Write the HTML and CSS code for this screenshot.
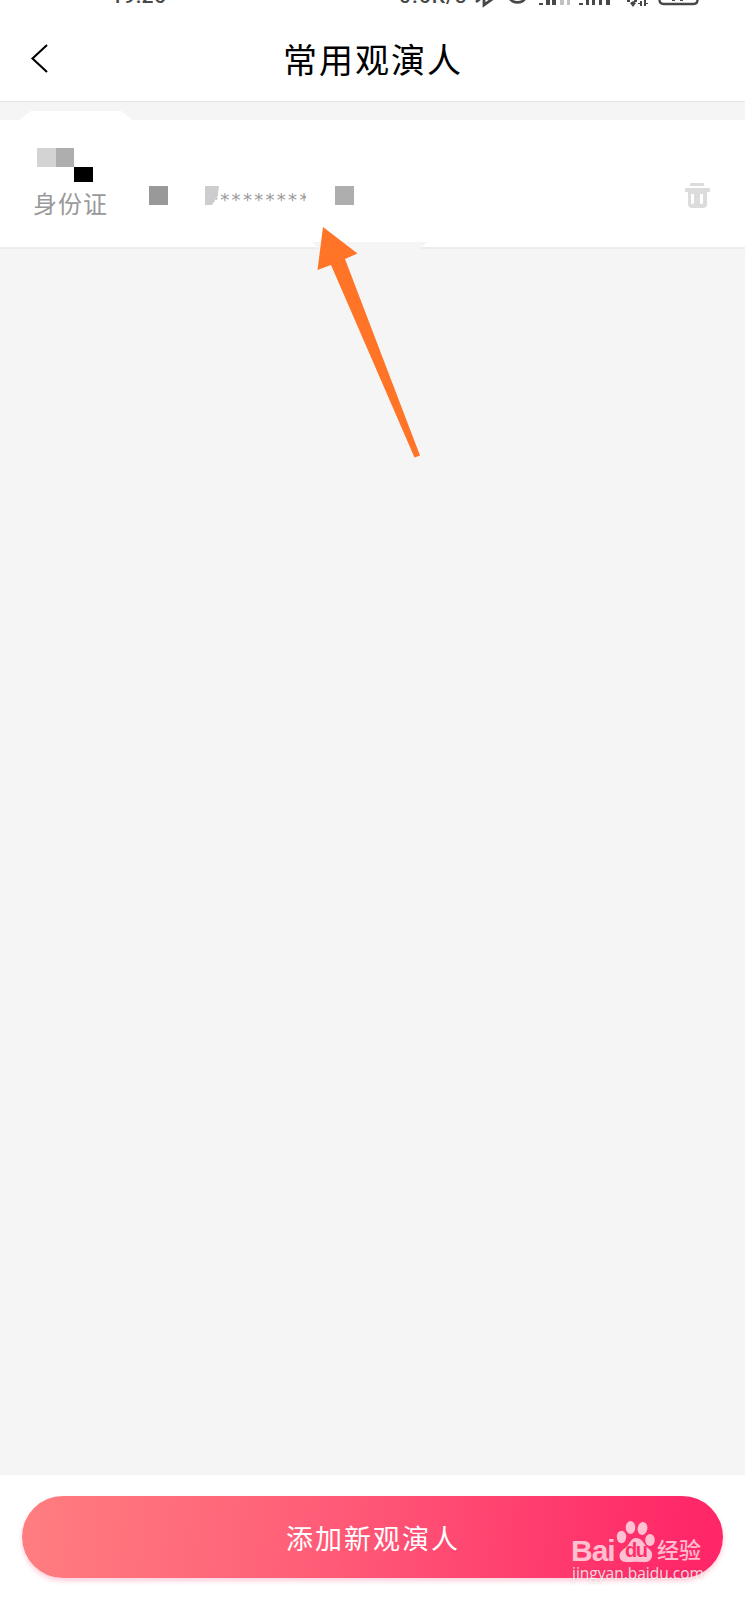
FILE: index.html
```html
<!DOCTYPE html>
<html lang="zh-CN">
<head>
  <meta charset="UTF-8">
  <title>常用观演人</title>
  <link rel="stylesheet" href="styles.css">
</head>
<body>
  <div class="page">
    <div class="status-bar">
      <span class="time">19:26</span>
      <span class="speed">0.6K/s</span>
      <svg class="status-icons" width="226" height="8" viewBox="474 0 226 8">
        <g fill="none" stroke="#484848" stroke-width="2">
          <path d="M476 2l4-3M484 -4V5l7-5-4-3" stroke-width="2.8"/>
          <path d="M509 -3a9 8 0 0 0 17 0" stroke-width="2.6"/>
          <path d="M659.500 -3V0q0 4 4 4h30q4 0 4-4v-3" stroke-width="2.400"/>
        </g>
        <path fill="#484848" d="M539 3h4v2h-4zM546 0h4v5h-4zM552 0h4v5h-4zM579 3h4v2h-4zM586 0h3v5h-3zM592 0h3v5h-3zM599 0h3v5h-3zM606 0h4v5h-4zM627 0h3v2h-3zM634 0h3v2h-3zM630 3l3-2 3 2-3 4zM640 1h2v5h-2zM644 0h2v6h-2zM638 3h3v1h-3zM645 3h3v1h-3zM672 0h3v1h-3zM680 0h3v1h-3z"/>
        <path fill="#c2c2c2" d="M560 0h4v5h-4zM567 0h3v5h-3z"/>
      </svg>
    </div>

    <div class="header">
      <svg class="back" width="18" height="30" viewBox="0 0 18 30">
        <path d="M17 2L2.500 15.500 17 29" fill="none" stroke="#000" stroke-width="2.100"/>
      </svg>
      <h1 class="title">常用观演人</h1>
    </div>

    <div class="list">
      <div class="card">
        <div class="tab"></div>
        <div class="person">
          <svg class="mosaic" width="56" height="34" viewBox="0 0 56 34">
            <path fill="#d3d3d3" d="M0 0h19v19H0z"/>
            <path fill="#aeaeae" d="M19 0h18v19H19z"/>
            <path fill="#000" d="M37 19h19v15H37z"/>
          </svg>
          <span class="label">身份证</span>
        </div>
        <div class="number">
          <span class="block dark"></span>
          <span class="stars">*********</span>
          <span class="block"></span>
        </div>
        <svg class="trash" width="26" height="28" viewBox="0 0 26 28">
          <path fill="#dcdcdc" fill-rule="evenodd" d="M6 1h12q1 0 1 1v1q0 1-1 1H6q-1 0-1-1V2q0-1 1-1zM1 6h23q1 0 1 1v2q0 1-1 1h-2v12q0 4-4 4H7q-4 0-4-4V10H1Q0 10 0 9V7q0-1 1-1zM6 12v9q0 1 1.500 1T9 21v-9zM15 12v9q0 1 1.500 1T18 21v-9z"/>
        </svg>
        <div class="notch"></div>
      </div>
      <svg class="arrow" width="108" height="232" viewBox="315 226 108 232">
        <path fill="#ff7427" d="M323 227l34.500 26.500L345 259l75 196.500-5.500 2L331 265l-13.500 5z"/>
      </svg>
    </div>

    <div class="footer">
      <button class="add">添加新观演人</button>
      <div class="watermark">
        <div class="brand">
          <span class="bai">Bai</span>
          <span class="paw">
            <svg width="40" height="43" viewBox="0 0 40 43">
              <g class="paw-shape">
                <ellipse cx="5.500" cy="17" rx="4.700" ry="6.200"/>
                <ellipse cx="14.500" cy="7.500" rx="4.800" ry="6.500"/>
                <ellipse cx="26.500" cy="8.500" rx="4.800" ry="6.500" transform="rotate(12 26.500 8.500)"/>
                <ellipse cx="34" cy="20" rx="4.800" ry="6"/>
                <path d="M20 18c5 0 7 4 10 8 4 4 7 6 6 10-1 6-6 6.500-10 6q-6-.5-12 0C9 42.500 4 42 3.500 36c0-5 5-7 8-10 3-4 4-8 8.500-8z"/>
              </g>
            </svg>
            <span class="du">du</span>
          </span>
          <span class="jingyan">经验</span>
        </div>
        <div class="url">jingyan.baidu.com</div>
      </div>
    </div>
  </div>
</body>
</html>
```
FILE: styles.css
```css
* {
  box-sizing: border-box;
}
body {
  margin: 0;
  font-family: "Noto Sans CJK SC", sans-serif;
  background: #f5f5f5;
}
.page {
  display: flex;
  flex-direction: column;
  height: 1600px;
  overflow: hidden;
}
.status-bar {
  display: flex;
  height: 16px;
  padding-left: 111px;
  background: #fff;
  color: #484848;
  font-family: Roboto, sans-serif;
  font-size: 21px;
  font-weight: 500;
  line-height: 24px;
}
.time,
.speed {
  margin-top: -16px;
  height: 24px;
}
.time {
  width: 288px;
  letter-spacing: 0.4px;
}
.speed {
  width: 75px;
  letter-spacing: 1px;
}
.header {
  display: flex;
  align-items: center;
  height: 86px;
  padding: 0 30px;
  background: #fff;
  border-bottom: 1px solid #e6e6e6;
}
.back {
  margin-bottom: 1px;
}
.title {
  flex: 1;
  margin: 0 17px 0 0;
  text-align: center;
  font-size: 34px;
  font-weight: 400;
  letter-spacing: 2px;
  color: #000;
}
.list {
  position: relative;
  flex: 1;
  padding-top: 18px;
}
.card {
  position: relative;
  display: flex;
  height: 129px;
  padding-left: 33px;
  background: #fff;
  border-bottom: 2px solid #ededed;
}
.tab {
  position: absolute;
  left: 18px;
  top: -9px;
  width: 115px;
  height: 10px;
  background: #fff;
  clip-path: polygon(0 100%, 11% 0, 90% 0, 100% 100%);
}
.notch {
  position: absolute;
  left: 312px;
  top: 122px;
  width: 115px;
  height: 7px;
  background: #f5f5f5;
  clip-path: polygon(0 0, 100% 0, 94% 100%, 6% 100%);
}
.person {
  display: flex;
  flex-direction: column;
  width: 116px;
  padding-top: 28px;
}
.mosaic {
  margin-left: 4px;
}
.label {
  margin-top: 3px;
  font-size: 24px;
  line-height: 36px;
  letter-spacing: 1px;
  color: #999;
}
.number {
  display: flex;
  padding-top: 66px;
  width: 536px;
}
.block {
  width: 19px;
  height: 19px;
  background: #aeaeae;
}
.block.dark {
  background: #999;
}
.stars {
  position: relative;
  width: 101px;
  height: 19px;
  margin: 0 29px 0 37px;
  padding-left: 4px;
  overflow: hidden;
  font-family: "DejaVu Sans", sans-serif;
  font-size: 18px;
  line-height: 27px;
  letter-spacing: 2.3px;
  color: #999;
}
.stars::before {
  content: "";
  position: absolute;
  left: 0;
  top: 0;
  width: 14px;
  height: 19px;
  background: #cdcdcd;
  clip-path: polygon(0 0, 100% 0, 90% 55%, 50% 100%, 0 100%);
}
.trash {
  margin-top: 62px;
}
.arrow {
  position: absolute;
  left: 315px;
  top: 124px;
}
.footer {
  position: relative;
  height: 125px;
  padding: 21px 22px;
  background: #fff;
}
.add {
  display: block;
  width: 100%;
  height: 82px;
  padding: 0 0 0 1px;
  border: none;
  border-radius: 41px;
  background: linear-gradient(95deg, #ff7e80, #ff5f78 40%, #ff2768 95%);
  box-shadow: 0 3px 5px rgba(255, 60, 110, 0.25);
  color: #fff;
  font-family: inherit;
  font-size: 27px;
  letter-spacing: 2px;
}
.watermark {
  position: absolute;
  left: 571px;
  top: 45px;
  width: 135px;
}
.brand {
  display: flex;
  align-items: flex-end;
  height: 43px;
  color: rgba(255, 255, 255, 0.7);
}
.bai {
  width: 45px;
  font-family: "Liberation Sans", sans-serif;
  font-size: 30px;
  font-weight: 700;
  line-height: 25px;
  letter-spacing: -1px;
}
.paw {
  position: relative;
  width: 41px;
  height: 43px;
}
.paw-shape {
  fill: rgba(255, 255, 255, 0.7);
}
.du {
  position: absolute;
  left: 9px;
  top: 18px;
  font-family: "Liberation Sans", sans-serif;
  font-size: 20px;
  font-weight: 700;
  line-height: 24px;
  letter-spacing: -1.5px;
  color: #ff2f69;
}
.jingyan {
  font-size: 22px;
  font-weight: 500;
  line-height: 29px;
}
.url {
  margin-left: 1px;
  font-family: "Open Sans", sans-serif;
  font-size: 15.5px;
  line-height: 20px;
  color: rgba(255, 255, 255, 0.8);
  text-shadow: 0 0 2px rgba(120, 90, 100, 0.3);
}
```
